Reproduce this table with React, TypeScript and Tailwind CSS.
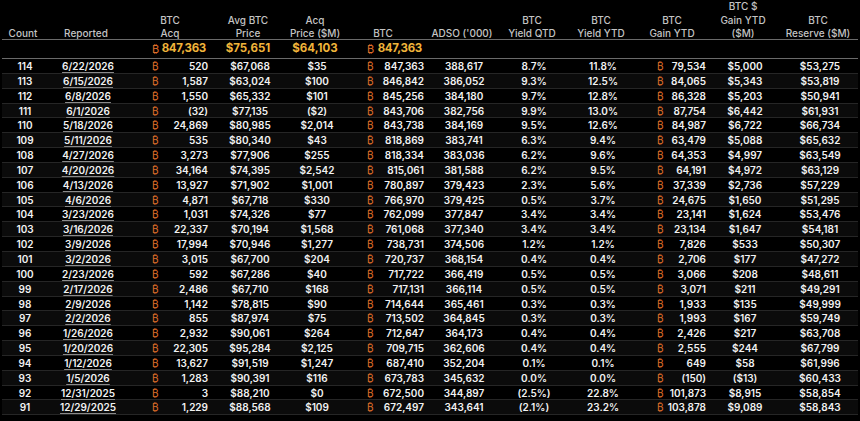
import React from "react";

type Row = [string, string, string, string, string, string, string, string, string, string, string, string];

const rows: Row[] = [
  ["114", "6/22/2026", "520", "$67,068", "$35", "847,363", "388,617", "8.7%", "11.8%", "79,534", "$5,000", "$53,275"],
  ["113", "6/15/2026", "1,587", "$63,024", "$100", "846,842", "386,052", "9.3%", "12.5%", "84,065", "$5,343", "$53,819"],
  ["112", "6/8/2026", "1,550", "$65,332", "$101", "845,256", "384,180", "9.7%", "12.8%", "86,328", "$5,203", "$50,941"],
  ["111", "6/1/2026", "(32)", "$77,135", "($2)", "843,706", "382,756", "9.9%", "13.0%", "87,754", "$6,442", "$61,931"],
  ["110", "5/18/2026", "24,869", "$80,985", "$2,014", "843,738", "384,169", "9.5%", "12.6%", "84,987", "$6,722", "$66,734"],
  ["109", "5/11/2026", "535", "$80,340", "$43", "818,869", "383,741", "6.3%", "9.4%", "63,479", "$5,088", "$65,632"],
  ["108", "4/27/2026", "3,273", "$77,906", "$255", "818,334", "383,036", "6.2%", "9.6%", "64,353", "$4,997", "$63,549"],
  ["107", "4/20/2026", "34,164", "$74,395", "$2,542", "815,061", "381,588", "6.2%", "9.5%", "64,191", "$4,972", "$63,129"],
  ["106", "4/13/2026", "13,927", "$71,902", "$1,001", "780,897", "379,423", "2.3%", "5.6%", "37,339", "$2,736", "$57,229"],
  ["105", "4/6/2026", "4,871", "$67,718", "$330", "766,970", "379,425", "0.5%", "3.7%", "24,675", "$1,650", "$51,295"],
  ["104", "3/23/2026", "1,031", "$74,326", "$77", "762,099", "377,847", "3.4%", "3.4%", "23,141", "$1,624", "$53,476"],
  ["103", "3/16/2026", "22,337", "$70,194", "$1,568", "761,068", "377,340", "3.4%", "3.4%", "23,134", "$1,647", "$54,181"],
  ["102", "3/9/2026", "17,994", "$70,946", "$1,277", "738,731", "374,506", "1.2%", "1.2%", "7,826", "$533", "$50,307"],
  ["101", "3/2/2026", "3,015", "$67,700", "$204", "720,737", "368,154", "0.4%", "0.4%", "2,706", "$177", "$47,272"],
  ["100", "2/23/2026", "592", "$67,286", "$40", "717,722", "366,419", "0.5%", "0.5%", "3,066", "$208", "$48,611"],
  ["99", "2/17/2026", "2,486", "$67,710", "$168", "717,131", "366,114", "0.5%", "0.5%", "3,071", "$211", "$49,291"],
  ["98", "2/9/2026", "1,142", "$78,815", "$90", "714,644", "365,461", "0.3%", "0.3%", "1,933", "$135", "$49,999"],
  ["97", "2/2/2026", "855", "$87,974", "$75", "713,502", "364,845", "0.3%", "0.3%", "1,993", "$167", "$59,749"],
  ["96", "1/26/2026", "2,932", "$90,061", "$264", "712,647", "364,173", "0.4%", "0.4%", "2,426", "$217", "$63,708"],
  ["95", "1/20/2026", "22,305", "$95,284", "$2,125", "709,715", "362,606", "0.4%", "0.4%", "2,555", "$244", "$67,799"],
  ["94", "1/12/2026", "13,627", "$91,519", "$1,247", "687,410", "352,204", "0.1%", "0.1%", "649", "$58", "$61,996"],
  ["93", "1/5/2026", "1,283", "$90,391", "$116", "673,783", "345,632", "0.0%", "0.0%", "(150)", "($13)", "$60,433"],
  ["92", "12/31/2025", "3", "$88,210", "$0", "672,500", "344,897", "(2.5%)", "22.8%", "101,873", "$8,915", "$58,854"],
  ["91", "12/29/2025", "1,229", "$88,568", "$109", "672,497", "343,641", "(2.1%)", "23.2%", "103,878", "$9,089", "$58,843"],
];

const GRID =
  "grid grid-cols-[46px_80px_88px_68px_66px_70px_88px_52px_86px_56px_86px_74px]";

const B = () => <span className="text-[#e0702a] font-normal">₿</span>;

function Header({ lines, extra = "" }: { lines: string[]; extra?: string }) {
  return (
    <div className={`flex flex-col items-center justify-end text-center whitespace-nowrap ${extra}`}>
      {lines.map((l, i) => (
        <div key={i}>{l}</div>
      ))}
    </div>
  );
}

export default function App() {
  return (
    <div
      className="w-[860px] h-[421px] overflow-hidden bg-black text-[#f2f2f2]"
      style={{ fontFamily: "Inter, 'Liberation Sans', sans-serif" }}
    >
      {/* header */}
      <div className={`${GRID} h-[39px] text-[10px] leading-[13.5px] font-medium text-[#c4c4c4] pb-[1px]`}>
        <Header lines={["Count"]} />
        <Header lines={["Reported"]} />
        <Header lines={["BTC", "Acq"]} />
        <Header lines={["Avg BTC", "Price"]} />
        <Header lines={["Acq", "Price ($M)"]} />
        <Header lines={["BTC"]} />
        <Header lines={["ADSO ('000)"]} />
        <Header lines={["BTC", "Yield QTD"]} />
        <Header lines={["BTC", "Yield YTD"]} />
        <Header lines={["BTC", "Gain YTD"]} />
        <Header lines={["BTC $", "Gain YTD", "($M)"]} />
        <Header lines={["BTC", "Reserve ($M)"]} extra="pr-[10px]" />
      </div>

      <div className="mx-[2px] h-px bg-[#6a6a6a]" />

      {/* totals */}
      <div className={`${GRID} h-[18px] items-center text-[11.5px] font-bold text-[#f0b43a]`}>
        <div />
        <div />
        <div className="flex justify-between items-center pl-[26px] pr-[8px]">
          <span className="text-[#e0702a] font-normal text-[11px]">₿</span>
          <span className="tracking-[-0.3px]">847,363</span>
        </div>
        <div className="text-center">$75,651</div>
        <div className="text-center">$64,103</div>
        <div className="flex justify-between items-center pl-[19px] -mr-[4px]">
          <span className="text-[#e0702a] font-normal text-[11px]">₿</span>
          <span className="tracking-[-0.3px]">847,363</span>
        </div>
        <div />
        <div />
        <div />
        <div />
        <div />
        <div />
      </div>

      <div className="mx-[2px] h-px bg-[#6a6a6a]" />

      {/* rows */}
      <div className="text-[10px] font-semibold">
        {rows.map((r, i) => (
          <div
            key={r[0]}
            className={`${GRID} h-[14.85px] items-center border-b border-[#262626] mx-[2px] ${
              i % 2 === 1 ? "bg-[#0b0b0b]" : "bg-black"
            }`}
          >
            <div className="text-center">{r[0]}</div>
            <div className="text-center">
              <span className="underline decoration-[#8a8a8a] underline-offset-[2px] decoration-1">{r[1]}</span>
            </div>
            <div className="flex justify-between pl-[24px] pr-[8px]">
              <B />
              <span>{r[2]}</span>
            </div>
            <div className="text-center">{r[3]}</div>
            <div className="text-center">{r[4]}</div>
            <div className="flex justify-between pl-[17px] -mr-[4px]">
              <B />
              <span>{r[5]}</span>
            </div>
            <div className="text-center">{r[6]}</div>
            <div className="text-center">{r[7]}</div>
            <div className="text-center">{r[8]}</div>
            <div className="flex justify-between pl-[11px] -mr-[4px]">
              <B />
              <span>{r[9]}</span>
            </div>
            <div className="text-center">{r[10]}</div>
            <div className="text-center pr-[10px]">{r[11]}</div>
          </div>
        ))}
      </div>
    </div>
  );
}
